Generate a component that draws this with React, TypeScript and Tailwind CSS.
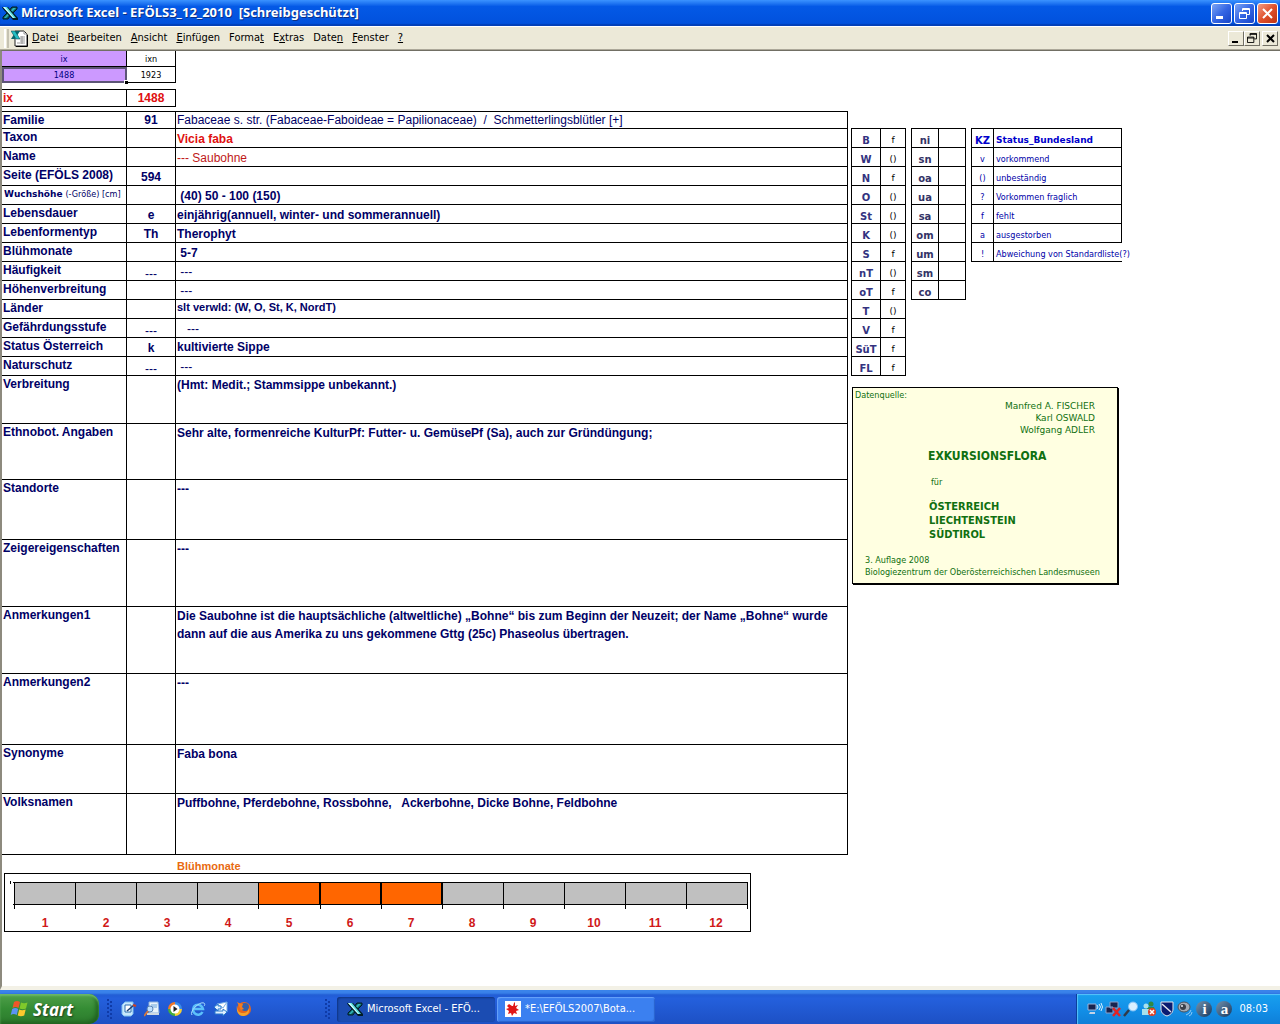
import type { ReactNode } from "react"
import clsx from "clsx"

const menuItems = [
  ["", "D", "atei"],
  ["", "B", "earbeiten"],
  ["", "A", "nsicht"],
  ["", "E", "infügen"],
  ["Forma", "t", ""],
  ["E", "x", "tras"],
  ["Date", "n", ""],
  ["", "F", "enster"],
  ["", "?", ""],
]

type Row = {
  label: ReactNode
  code?: string
  value?: string
  height: string
  className?: string
}

const rows: Row[] = [
  {
    label: "Familie",
    code: "91",
    value: "Fabaceae s. str. (Fabaceae-Faboideae = Papilionaceae)  /  Schmetterlingsblütler [+]",
    height: "h-[17px]",
    className: "align-bottom font-normal",
  },
  { label: "Taxon", value: "Vicia faba", height: "h-[19px]", className: "align-bottom text-[#e01010]" },
  { label: "Name", value: "--- Saubohne", height: "h-[19px]", className: "align-bottom font-normal text-[#c01818]" },
  { label: "Seite (EFÖLS 2008)", code: "594", height: "h-[19px]" },
  {
    label: (
      <span className="block pl-px font-['DejaVu_Sans_Condensed','DejaVu_Sans',sans-serif] text-[9px]">
        <span className="font-['DejaVu_Sans',sans-serif]">Wuchshöhe</span>{" "}
        <span className="font-normal">(-Größe) [cm]</span>
      </span>
    ),
    value: " (40) 50 - 100 (150)",
    height: "h-[19px]",
    className: "align-bottom",
  },
  { label: "Lebensdauer", code: "e", value: "einjährig(annuell, winter- und sommerannuell)", height: "h-[19px]", className: "align-bottom" },
  { label: "Lebenformentyp", code: "Th", value: "Therophyt", height: "h-[19px]", className: "align-bottom" },
  { label: "Blühmonate", value: " 5-7", height: "h-[19px]", className: "align-bottom" },
  { label: "Häufigkeit", code: "---", value: " ---", height: "h-[19px]", className: "align-bottom font-normal" },
  { label: "Höhenverbreitung", value: " ---", height: "h-[19px]", className: "align-bottom font-normal" },
  { label: "Länder", value: "slt verwld: (W, O, St, K, NordT)", height: "h-[19px]", className: "align-top text-[11px]" },
  { label: "Gefährdungsstufe", code: "---", value: "   ---", height: "h-[19px]", className: "align-bottom font-normal" },
  { label: "Status Österreich", code: "k", value: "kultivierte Sippe", height: "h-[19px]", className: "align-middle" },
  { label: "Naturschutz", code: "---", value: " ---", height: "h-[19px]", className: "align-bottom font-normal" },
  { label: "Verbreitung", value: "(Hmt: Medit.; Stammsippe unbekannt.)", height: "h-[48px]" },
  {
    label: "Ethnobot. Angaben",
    value: "Sehr alte, formenreiche KulturPf: Futter- u. GemüsePf (Sa), auch zur Gründüngung;",
    height: "h-[56px]",
  },
  { label: "Standorte", value: "---", height: "h-[60px]" },
  { label: "Zeigereigenschaften", value: "---", height: "h-[67px]" },
  {
    label: "Anmerkungen1",
    value:
      "Die Saubohne ist die hauptsächliche (altweltliche) „Bohne“ bis zum Beginn der Neuzeit; der Name „Bohne“ wurde\ndann auf die aus Amerika zu uns gekommene Gttg (25c) Phaseolus übertragen.",
    height: "h-[67px]",
  },
  { label: "Anmerkungen2", value: "---", height: "h-[71px]" },
  { label: "Synonyme", value: "Faba bona", height: "h-[49px]" },
  { label: "Volksnamen", value: "Puffbohne, Pferdebohne, Rossbohne,   Ackerbohne, Dicke Bohne, Feldbohne", height: "h-[61px]" },
]

const states = [
  ["B", "f"], ["W", "()"], ["N", "f"], ["O", "()"], ["St", "()"], ["K", "()"], ["S", "f"],
  ["nT", "()"], ["oT", "f"], ["T", "()"], ["V", "f"], ["SüT", "f"], ["FL", "f"],
]

const regions = ["ni", "sn", "oa", "ua", "sa", "om", "um", "sm", "co"]

const legend = [
  ["v", "vorkommend"],
  ["()", "unbeständig"],
  ["?", "Vorkommen fraglich"],
  ["f", "fehlt"],
  ["a", "ausgestorben"],
  ["!", "Abweichung von Standardliste(?)"],
]

const months = [1, 2, 3, 4, 5, 6, 7, 8, 9, 10, 11, 12]

function ExcelIcon() {
  return (
    <svg width="16" height="16" viewBox="0 0 16 16" className="shrink-0">
      <path d="M10 2h5v2l-4 4-3 3-2 3H1v-2l4-4z" fill="#0b5a60" stroke="#021c24" />
      <path d="M11 3h3L4 13H2z" fill="#2fb4b8" />
      <path d="M0 2h6l10 11v2h-5L1 4z" fill="#021c24" />
      <path d="M1 2h4l9 11h-3z" fill="#58dde0" />
      <path d="M1 2h2l9 11h-1z" fill="#d8ffff" />
    </svg>
  )
}

function SheetIcon() {
  return (
    <svg width="17" height="17" viewBox="0 0 17 17" className="shrink-0">
      <path d="M4 1h9l3 3v12H4z" fill="#fff" stroke="#222" />
      <path d="M13 1v3h3M9 7h5M9 9h5M9 11h5M6 13h8M11 6v8" fill="none" stroke="#999" />
      <path d="M5 16.500h11.500V5" fill="none" stroke="#000" />
      <path d="M5 1h4L4 9H0z" fill="#0a6870" />
      <path d="M0 1h4l5 8H5z" fill="#25bfc4" stroke="#053b40" strokeWidth=".5" />
    </svg>
  )
}

function RestoreGlyph({ size }: { size: number }) {
  return (
    <svg width={size} height={size} viewBox="0 0 11 11" fill="none" stroke="currentColor">
      <path d="M3.500 3V.500h7v6H8M3 1.500h8M.500 4.500h7v6h-7zM0 5.500h8" />
    </svg>
  )
}

function CaptionButton({ label, close, children }: { label: string; close?: boolean; children: ReactNode }) {
  return (
    <button
      aria-label={label}
      className={clsx(
        "flex size-[21px] items-center justify-center rounded-[3px] border border-white text-white",
        close
          ? "bg-linear-to-br from-[#ef9a82] via-[#e0502b] to-[#bd3210]"
          : "bg-linear-to-br from-[#7ea4f4] via-[#3566e4] to-[#1644c8]",
      )}
    >
      {children}
    </button>
  )
}

function MdiButton({ label, children }: { label: string; children: ReactNode }) {
  return (
    <button
      aria-label={label}
      className="flex h-[15px] w-4 items-center justify-center border border-t-white border-r-[#716f64] border-b-[#716f64] border-l-white bg-[#ece9d8] text-black"
    >
      {children}
    </button>
  )
}

function TitleBar() {
  return (
    <header className="flex h-[26px] items-center bg-linear-to-b from-[#3b93ff] via-[#0459e6] via-25% to-[#0150dc] pr-0.5 pl-0.5 shadow-[inset_0_-2px_1px_#0340b8]">
      <ExcelIcon />
      <h1 className="flex-1 pl-[3px] font-['Noto_Sans','Open_Sans',sans-serif] text-[13px] font-bold whitespace-pre text-white [text-shadow:1px_1px_#0b2f86]">
        Microsoft Excel - EFÖLS3_12_2010  [Schreibgeschützt]
      </h1>
      <div className="flex gap-0.5">
        <CaptionButton label="Minimieren">
          <svg width="11" height="11"><path d="M0 8h7v3H0z" fill="#fff" /></svg>
        </CaptionButton>
        <CaptionButton label="Wiederherstellen">
          <RestoreGlyph size={11} />
        </CaptionButton>
        <CaptionButton label="Schließen" close>
          <svg width="11" height="11"><path d="M1 1l9 9M10 1l-9 9" stroke="#fff" strokeWidth="2" /></svg>
        </CaptionButton>
      </div>
    </header>
  )
}

function MenuBar() {
  return (
    <nav className="flex h-6 items-center border-t border-b border-t-white border-b-[#aca899] bg-[#ece9d8] pr-0.5 pl-1">
      <span className="mr-0.5 h-[19px] w-[5px] border-x-2 border-l-white border-r-[#c5c2b2]" />
      <SheetIcon />
      <div className="flex flex-1 gap-[9px] pl-1 font-['DejaVu_Sans_Condensed','DejaVu_Sans',sans-serif] text-[11px] text-black">
        {menuItems.map(([before, key, after]) => (
          <button key={before + key + after}>
            {before}
            <u>{key}</u>
            {after}
          </button>
        ))}
      </div>
      <MdiButton label="Mappe minimieren">
        <svg width="10" height="9"><path d="M1 7h6v2H1z" /></svg>
      </MdiButton>
      <MdiButton label="Mappe wiederherstellen">
        <RestoreGlyph size={10} />
      </MdiButton>
      <span className="w-0.5" />
      <MdiButton label="Mappe schließen">
        <svg width="9" height="9"><path d="M1 1l7 7M8 1L1 8" stroke="#000" strokeWidth="2" /></svg>
      </MdiButton>
    </nav>
  )
}

function IndexTables() {
  return (
    <>
      <table className="w-[174px] table-fixed border-separate border-spacing-0 text-center font-['DejaVu_Sans_Condensed','DejaVu_Sans',sans-serif] text-[9px] leading-[14px]">
        <tbody>
          <tr className="h-4">
            <td className="w-[125px] border-r border-b border-black bg-[#cc99ff] text-[#000080]">ix</td>
            <td className="border-r border-b border-black">ixn</td>
          </tr>
          <tr className="h-4">
            <td className="relative border-r border-b border-black bg-[#cc99ff] text-[#000080] outline-2 -outline-offset-2 outline-[#5d5577]">
              1488
              <span className="absolute -right-0.5 -bottom-0.5 size-1 border-t border-l border-white bg-black" />
            </td>
            <td className="border-r border-b border-black">1923</td>
          </tr>
        </tbody>
      </table>
      <table className="mt-1.5 w-[174px] table-fixed border-separate border-spacing-0 border-t border-black text-[12px] leading-4 font-bold text-[#e01010]">
        <tbody>
          <tr className="h-[17px]">
            <th className="w-[125px] border-r border-b border-black pl-px text-left">ix</th>
            <td className="border-r border-b border-black text-center">1488</td>
          </tr>
        </tbody>
      </table>
    </>
  )
}

function SpeciesTable() {
  return (
    <table className="mt-1 w-[846px] table-fixed border-separate border-spacing-0 border-t border-black text-[12px] font-bold text-[#000066]">
      <tbody>
        {rows.map((row, i) => (
          <tr key={i} className={row.height}>
            <th className="w-[125px] border-r border-b border-black pl-px text-left align-top leading-4 whitespace-nowrap">
              {row.label}
            </th>
            <td
              className={clsx(
                "w-[49px] border-r border-b border-black text-center align-bottom",
                row.code === "---" ? "leading-3 font-normal" : "leading-[15px]",
              )}
            >
              {row.code}
            </td>
            <td
              className={clsx(
                "border-r border-b border-black pl-px whitespace-pre",
                row.className ? "leading-[15px]" : "align-top leading-[18px]",
                row.className,
              )}
            >
              {row.value}
            </td>
          </tr>
        ))}
      </tbody>
    </table>
  )
}

function FloweringChart() {
  return (
    <figure>
      <figcaption className="pt-1 pl-[175px] text-[11px] leading-[14px] font-bold text-[#e86a10]">Blühmonate</figcaption>
      <svg width="747" height="59" className="ml-0.5 block" shapeRendering="crispEdges">
        <rect x=".5" y=".5" width="746" height="58" fill="#fff" stroke="#000" />
        <path d="M6.500 8v3" stroke="#000" />
        {months.map((m, i) => (
          <g key={m}>
            <rect
              x={10.5 + i * 61.1}
              y="9.500"
              width="61"
              height="22"
              fill={m >= 5 && m <= 7 ? "#ff6600" : "#c0c0c0"}
              stroke="#000"
            />
            <path d={`M${10.5 + i * 61.1} 31v5`} stroke="#000" />
            <text x={41 + i * 61} y="54" textAnchor="middle" className="fill-[#d01818] text-[12px] font-bold">
              {m}
            </text>
          </g>
        ))}
        <path d="M316 9v23M377 9v23M438 9v23" stroke="#000" strokeWidth="2" />
        <path d="M743.500 31v5M9 9.500h2M9 31.500h2" stroke="#000" />
      </svg>
    </figure>
  )
}

function StatusTables() {
  return (
    <div className="flex items-start gap-[5px] font-['DejaVu_Sans',sans-serif] text-[9px] leading-[13px]">
      <table className="w-[55px] table-fixed border-separate border-spacing-0 border-t border-l border-black text-center">
        <tbody>
          {states.map(([name, status]) => (
            <tr key={name} className="h-[19px]">
              <th className="w-[29px] border-r border-b border-black align-bottom text-[10px] text-[#333380]">{name}</th>
              <td className="border-r border-b border-black align-bottom">{status}</td>
            </tr>
          ))}
        </tbody>
      </table>
      <table className="w-[55px] table-fixed border-separate border-spacing-0 border-t border-l border-black text-center">
        <tbody>
          {regions.map((name) => (
            <tr key={name} className="h-[19px]">
              <th className="w-[27px] border-r border-b border-black align-bottom text-[10px] text-[#333366]">{name}</th>
              <td className="border-r border-b border-black" />
            </tr>
          ))}
        </tbody>
      </table>
      <table className="w-[151px] table-fixed border-separate border-spacing-0 border-t border-l border-black text-[#0000a8]">
        <thead>
          <tr className="h-[19px] text-[#0000cc]">
            <th className="w-[22px] border-r border-b border-black align-bottom text-[10px]">KZ</th>
            <th className="border-r border-b border-black pl-0.5 text-left align-bottom">Status_Bundesland</th>
          </tr>
        </thead>
        <tbody className="font-['DejaVu_Sans_Condensed','DejaVu_Sans',sans-serif]">
          {legend.map(([key, text]) => (
            <tr key={key} className="h-[19px]">
              <td className="border-r border-b border-black text-center align-bottom">{key}</td>
              <td className={clsx("border-b border-black pl-0.5 align-bottom whitespace-nowrap", key !== "!" && "border-r")}>
                {text}
              </td>
            </tr>
          ))}
        </tbody>
      </table>
    </div>
  )
}

function SourceBox() {
  return (
    <section className="mt-[11px] ml-px h-[197px] w-[266px] border border-black bg-[#ffffe1] font-['DejaVu_Sans_Condensed','DejaVu_Sans',sans-serif] text-[9px] leading-3 text-[#107010] shadow-[1px_1px_#000]">
      <p className="pt-px pl-0.5">Datenquelle:</p>
      <p className="-mt-px pr-[22px] text-right font-['DejaVu_Sans',sans-serif]">
        Manfred A. FISCHER
        <br />
        Karl OSWALD
        <br />
        Wolfgang ADLER
      </p>
      <h2 className="pt-3 pl-[75px] text-[12px] leading-4 font-bold">EXKURSIONSFLORA</h2>
      <p className="pt-3 pl-[78px]">für</p>
      <p className="pt-3 pl-[76px] text-[11px] leading-[14px] font-bold">
        ÖSTERREICH
        <br />
        LIECHTENSTEIN
        <br />
        SÜDTIROL
      </p>
      <p className="pt-3 pl-3 whitespace-nowrap">
        3. Auflage 2008
        <br />
        Biologiezentrum der Oberösterreichischen Landesmuseen
      </p>
    </section>
  )
}

function WindowsFlag() {
  return (
    <svg width="19" height="18" viewBox="0 0 19 18">
      <path d="M4 2c2-1.500 4-1.500 6 0L8.500 8C6.500 6.800 4.500 6.800 2.500 8z" fill="#f0562a" />
      <path d="M11 2.500c2 1 4 1 6.500 0L16 8.500c-2 1-4 1-6.500 0z" fill="#7fc92b" />
      <path d="M2.200 9c2-1.300 4-1.300 6 0l-1.500 6c-2-1.200-4-1.200-6 0z" fill="#5b93f5" />
      <path d="M9.200 9.500c2 1 4 1 6.500 0l-1.500 6c-2 1-4.500 1-6.500 0z" fill="#fcc92e" />
    </svg>
  )
}

function Grip() {
  return (
    <svg width="6" height="20" className="shrink-0" fill="#0f3ba8">
      {[0, 4, 8, 12, 16].map((y) => (
        <g key={y}>
          <rect x="0" y={y} width="2" height="2" />
          <rect x="3" y={y + 2} width="2" height="2" />
        </g>
      ))}
    </svg>
  )
}

function QuickLaunch() {
  return (
    <div className="flex items-center gap-[7px]">
      <button aria-label="Desktop anzeigen">
        <svg width="16" height="16" viewBox="0 0 16 16">
          <path d="M1 4l3-3h8v12l-2 2H3l-2-2z" fill="#c9e8fb" stroke="#7fc0f0" />
          <path d="M4 4h6v7H4z" fill="#fff" stroke="#2a6fb0" />
          <path d="M6 10l7-6" stroke="#1c3f72" strokeWidth="1.500" />
          <path d="M12 4l3 1" stroke="#d04020" strokeWidth="2" />
        </svg>
      </button>
      <button aria-label="Suchen">
        <svg width="16" height="16" viewBox="0 0 16 16">
          <path d="M5 1h9l1 11H5z" fill="#e9f3fb" stroke="#8fb2dc" />
          <path d="M7 4h6M7 6h6" stroke="#68a5dc" />
          <path d="M3 14h12v-2H3z" fill="#cfd8e0" />
          <circle cx="6" cy="8" r="3" fill="#bfe0ff" stroke="#5c84b4" />
          <path d="M4 10l-4 5" stroke="#d8783a" strokeWidth="2" />
        </svg>
      </button>
      <button aria-label="Media Player">
        <svg width="16" height="16" viewBox="0 0 16 16">
          <path d="M8 8V1a7 7 0 0 1 7 7z" fill="#3b8de8" />
          <path d="M8 8h7a7 7 0 0 1-7 7z" fill="#f4cf35" />
          <path d="M8 8v7a7 7 0 0 1-7-7z" fill="#43ad3e" />
          <path d="M8 8H1a7 7 0 0 1 7-7z" fill="#f07828" />
          <circle cx="8" cy="8" r="4.500" fill="#fff" />
          <path d="M6.500 5l4 3-4 3z" fill="#222" />
        </svg>
      </button>
      <button aria-label="Internet Explorer">
        <svg width="16" height="16" viewBox="0 0 16 16" fill="none">
          <path d="M12.500 11a5 5 0 1 1 .500-3H4" stroke="#5cc0fa" strokeWidth="2.500" />
          <path d="M2 14C-1 11 9 0 14 2c1 .500 1 2 0 3" stroke="#a9dcfb" />
        </svg>
      </button>
      <button aria-label="Outlook Express">
        <svg width="16" height="16" viewBox="0 0 16 16">
          <path d="M4 3l10-2v10H4z" fill="#fff" stroke="#78aee6" />
          <path d="M4 3l6 4 4-6" fill="none" stroke="#78aee6" />
          <path d="M1 6l4-3v2h3v3H5v2zM14 11l-4 4v-2H2v-3h8V8z" fill="#e0f0ff" stroke="#2878cc" />
        </svg>
      </button>
      <button aria-label="Firefox">
        <svg width="16" height="16" viewBox="0 0 16 16">
          <circle cx="8" cy="8" r="7" fill="#e8661c" />
          <circle cx="9" cy="6" r="4" fill="#2f5fae" />
          <path d="M1 4c0 7 3 8 6 8 3 0 5-1 6-5 1 6-3 8-6 8C2 15 0 10 1 4z" fill="#f5a32a" />
          <path d="M1 1c2 1 4 2 6 2L6 6l2 2-3 1z" fill="#f07c20" />
        </svg>
      </button>
    </div>
  )
}

function TrayIcons() {
  return (
    <div className="flex items-center gap-0.5">
      <svg width="16" height="16" viewBox="0 0 16 16">
        <path d="M1 3h8v6H1z" fill="#18244e" stroke="#9bb4da" />
        <path d="M3 11h5v2H2z" fill="#c3d4e8" />
        <path d="M10 4q2 2 0 4M12 3q3 3 0 6M14 2q3 4 0 8" fill="none" stroke="#d8f0ff" />
      </svg>
      <svg width="16" height="16" viewBox="0 0 16 16">
        <path d="M5 1h8v6H5zM1 6h7v6H1z" fill="#18244e" stroke="#8aa2cc" />
        <path d="M8 7l7 8M15 7l-7 8" stroke="#e22424" strokeWidth="2.500" />
      </svg>
      <svg width="16" height="16" viewBox="0 0 16 16">
        <path d="M6 9l-5 6" stroke="#303a48" strokeWidth="2.500" />
        <circle cx="10" cy="5.500" r="4.500" fill="#d9efff" stroke="#7ec0f6" />
      </svg>
      <svg width="16" height="16" viewBox="0 0 16 16">
        <circle cx="10" cy="3" r="2.500" fill="#2f8a44" />
        <path d="M6 6h7l2 6H6z" fill="#2f8a44" />
        <circle cx="5" cy="5" r="2.500" fill="#a9e0ec" />
        <path d="M1 8h7l1 6H1z" fill="#a9e0ec" />
        <circle cx="11" cy="11" r="4" fill="#df4126" />
        <path d="M9 9l4 4M13 9l-4 4" stroke="#fff" strokeWidth="1.500" />
      </svg>
      <svg width="16" height="16" viewBox="0 0 16 16">
        <path d="M2 1h12v7c0 4-3 6-6 7-3-1-6-3-6-7z" fill="#0a1c72" stroke="#e6e8ee" />
        <path d="M3 3l9 8" stroke="#e6e8ee" strokeWidth="1.500" />
      </svg>
      <svg width="16" height="16" viewBox="0 0 16 16">
        <ellipse cx="7" cy="6" rx="6" ry="5" fill="#a4abb4" stroke="#4a525c" />
        <circle cx="6" cy="6" r="3" fill="#3a4048" />
        <circle cx="5" cy="5" r="1" fill="#e8eef4" />
        <path d="M9 14q4-1 5-5M12 15q3-1 3-4" fill="none" stroke="#8ccaf8" />
      </svg>
      {["i", "a"].map((c) => (
        <span
          key={c}
          className="mx-px flex size-4 items-center justify-center rounded-full bg-linear-to-br from-[#7593ad] to-[#143a62] font-['Liberation_Serif',serif] text-[15px] leading-none font-bold text-white"
        >
          {c}
        </span>
      ))}
    </div>
  )
}

function Taskbar() {
  return (
    <footer className="flex h-[34px] items-stretch bg-linear-to-b from-[#1c55c8] via-[#2460dd] via-25% to-[#1d50c4] pt-1 font-['DejaVu_Sans_Condensed','DejaVu_Sans',sans-serif] text-[11px] text-white shadow-[inset_0_4px_2px_#3a83ea]">
      <button className="flex w-[99px] items-center gap-1 rounded-r-[10px] bg-linear-to-b from-[#4fa04a] via-[#348c34] to-[#2c7a2d] pl-2.5 shadow-[inset_0_2px_2px_#6cb868,inset_-3px_-2px_4px_#1f601f]">
        <WindowsFlag />
        <span className="font-['Open_Sans','Noto_Sans',sans-serif] text-[17px] leading-none font-bold italic [text-shadow:1px_1px_2px_#1c3c1c]">
          Start
        </span>
      </button>
      <div className="flex w-[238px] items-center pl-2">
        <Grip />
        <span className="w-2" />
        <QuickLaunch />
        <span className="flex-1" />
        <Grip />
        <span className="w-1.5" />
      </div>
      <div className="flex flex-1 items-center gap-0.5">
        <button className="flex h-[25px] w-[158px] items-center gap-1 rounded-[3px] bg-[#1b4cb2] pl-2.5 shadow-[inset_1px_1px_2px_#0e3380]">
          <ExcelIcon />
          Microsoft Excel - EFÖ...
        </button>
        <button className="flex h-[25px] w-[158px] items-center gap-1 rounded-[3px] bg-[#3b80f0] pl-2 shadow-[inset_1px_1px_1px_#6aa3fa,inset_-1px_-1px_1px_#2a62cc]">
          <svg width="16" height="16" viewBox="0 0 16 16" className="shrink-0">
            <path d="M0 0h16v16H0z" fill="#fff" />
            <path d="M7 5L4 3 2 5l2 2-3 1 3 2-1 3 3-1 1 3 2-3 3 1-1-3 3-1-3-2 2-3-3 1V1L9 2 8 5z" fill="#e01818" />
          </svg>
          *E:\EFÖLS2007\Bota...
        </button>
      </div>
      <div className="flex items-center gap-1.5 border-l border-[#0b3f9c] bg-linear-to-b from-[#19a0ee] via-[#1290e8] to-[#0f7fd8] pr-3 pl-2.5 shadow-[inset_1px_1px_1px_#58c4fa]">
        <TrayIcons />
        <time>08:03</time>
      </div>
    </footer>
  )
}

export default function App() {
  return (
    <div className="flex min-h-screen flex-col bg-white font-['Liberation_Sans',Arial,sans-serif]">
      <TitleBar />
      <MenuBar />
      <main className="flex flex-1 items-start border-t border-b-4 border-l-2 border-t-[#716f64] border-b-[#f3f1e6] border-l-[#8d8a7e]">
        <div>
          <IndexTables />
          <SpeciesTable />
          <FloweringChart />
        </div>
        <aside className="pt-[77px] pl-[3px]">
          <StatusTables />
          <SourceBox />
        </aside>
      </main>
      <Taskbar />
    </div>
  )
}
